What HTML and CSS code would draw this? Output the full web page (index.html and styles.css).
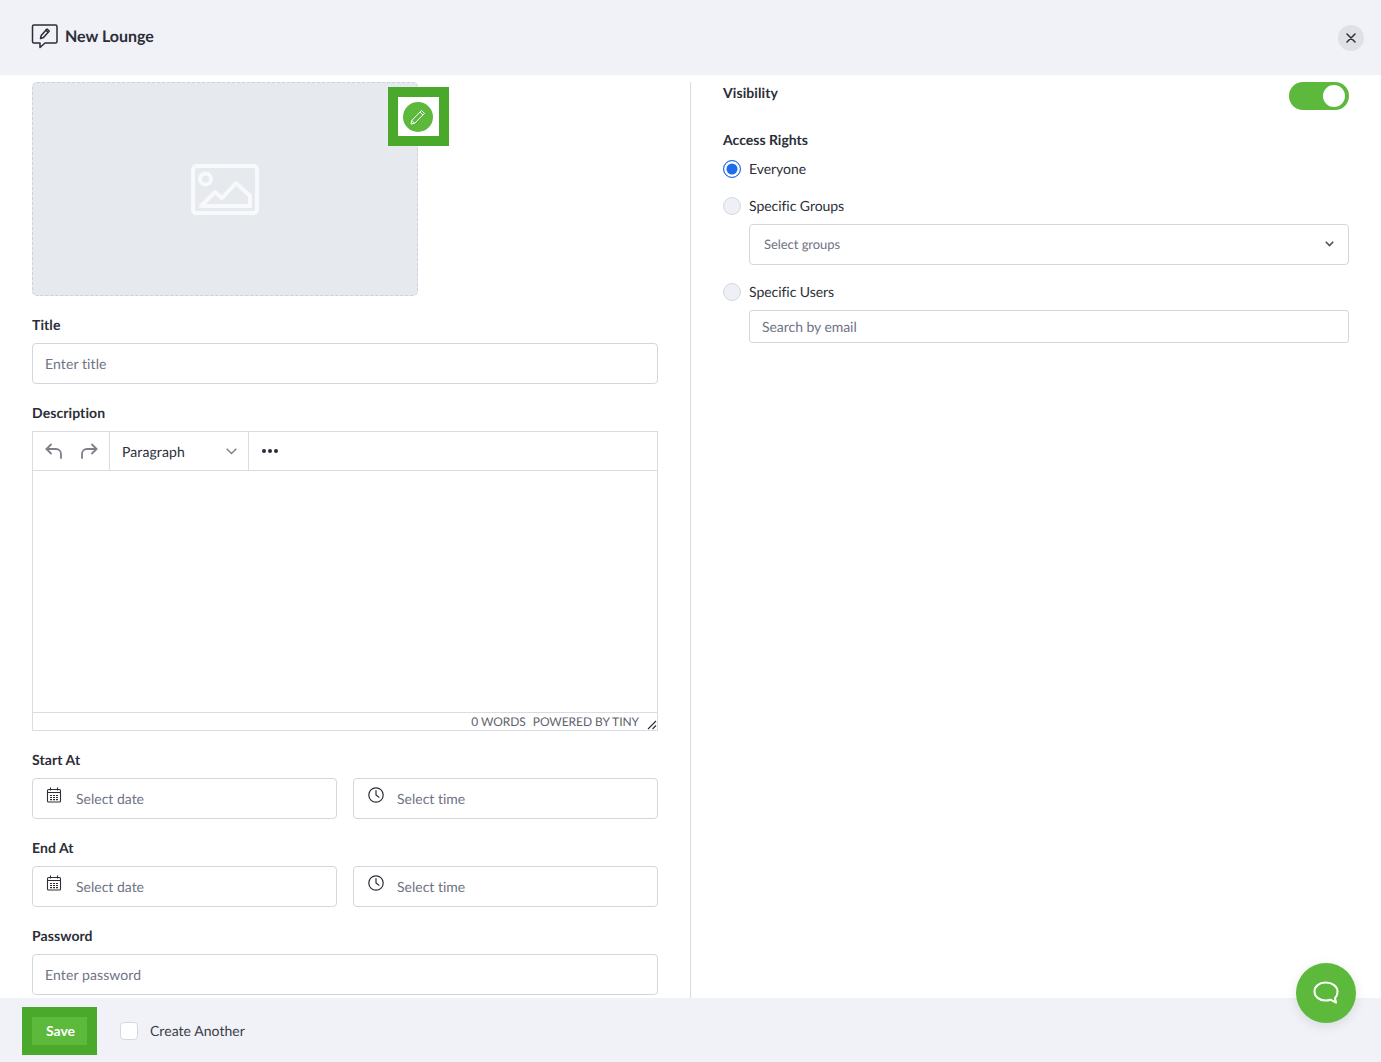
FILE: index.html
```html
<!DOCTYPE html>
<html lang="en">
<head>
<meta charset="utf-8">
<title>New Lounge</title>
<link rel="stylesheet" href="styles.css">
</head>
<body>
<div class="page">
  <header class="header">
    <div class="header-title">
      <svg class="lounge-icon" width="27" height="27" viewBox="0 0 27 27" fill="none" stroke="#2b2e38" stroke-width="1.5" stroke-linejoin="round" stroke-linecap="round">
        <path d="M3 2h21.5a1.5 1.5 0 0 1 1.5 1.5v15a1.5 1.5 0 0 1-1.5 1.5H14l-5 4.500V20H3a1.500 1.500 0 0 1-1.500-1.500v-15A1.500 1.500 0 0 1 3 2z"/>
        <path d="M9.500 15.500l.7-3 5.800-6.500 2.300 2-5.800 6.500z"/>
        <path d="M14.800 7.300l2.300 2"/>
      </svg>
      <h1 class="title">New Lounge</h1>
    </div>
    <button class="close-btn" aria-label="Close">
      <svg width="10" height="10" viewBox="0 0 10 10" stroke="#2b2e38" stroke-width="1.500" stroke-linecap="round"><path d="M1 1l8 8M9 1l-8 8"/></svg>
    </button>
  </header>

  <main class="main">
    <section class="col-left">
      <div class="cover">
        <svg class="cover-icon" width="68" height="51" viewBox="0 0 68 51" fill="none" stroke="#f8f9fb" stroke-width="4" stroke-linejoin="round">
          <rect x="2" y="2" width="64" height="47" rx="3.500"/>
          <circle cx="14.500" cy="15" r="5.500"/>
          <path d="M10 42l14-14 7 6 14-15 14 13v10z"/>
        </svg>
        <button class="edit-btn" aria-label="Edit image">
          <span class="edit-circle">
            <svg width="16" height="16" viewBox="0 0 16 16" fill="none" stroke="#fff" stroke-width="1" stroke-linejoin="round"><path d="M1 15l.8-3.500L11.500 1.500l3 2.800-9.800 10z"/><path d="M10 3.200l3 2.800M1.800 11.500l2.900 2.800"/></svg>
          </span>
        </button>
      </div>

      <div class="field">
        <label class="label">Title</label>
        <div class="input input-tall"><span class="ph ph-wide">Enter title</span></div>
      </div>

      <div class="field">
        <label class="label">Description</label>
        <div class="editor">
          <div class="toolbar">
            <div class="tb-group tb-history">
              <svg width="18" height="18" viewBox="0 0 18 18" fill="none" stroke="#7d808a" stroke-width="1.800" stroke-linecap="round" stroke-linejoin="round"><path d="M6 2.500L1.500 7 6 11.500"/><path d="M1.500 7h9.500a5 5 0 0 1 5 5v4"/></svg>
              <svg width="18" height="18" viewBox="0 0 18 18" fill="none" stroke="#7d808a" stroke-width="1.800" stroke-linecap="round" stroke-linejoin="round"><path d="M12 2.500L16.500 7 12 11.500"/><path d="M16.500 7H7a5 5 0 0 0-5 5v4"/></svg>
            </div>
            <div class="tb-group tb-format">
              <span class="tb-text">Paragraph</span>
              <svg width="11" height="7" viewBox="0 0 11 7" fill="none" stroke="#7d808a" stroke-width="1.400"><path d="M.7.8l4.800 4.800L10.300.8"/></svg>
            </div>
            <div class="tb-group tb-more">
              <span class="dot"></span><span class="dot"></span><span class="dot"></span>
            </div>
          </div>
          <div class="editor-body"></div>
          <div class="statusbar">
            <span>0 WORDS</span><span>POWERED BY TINY</span>
            <svg class="resize" width="10" height="10" viewBox="0 0 10 10" stroke="#2b2e38" stroke-width="1.100" fill="none"><path d="M1 9l8-8M5.500 9L9 5.500"/></svg>
          </div>
        </div>
      </div>

      <div class="field">
        <label class="label">Start At</label>
        <div class="pair">
          <div class="input input-tall input-icon">
            <svg class="ic" width="16" height="16" viewBox="0 0 16 16" fill="none" stroke="#2b2e38" stroke-width="1.100"><rect x="1.500" y="2.500" width="13" height="12.500" rx="1"/><path d="M1.500 5.500h13M4.500 .5v3M11.500 .5v3"/><path d="M4 8.500h2M7 8.500h2M10 8.500h2M4 10.500h2M7 10.500h2M10 10.500h2M4 12.700h2M7 12.700h2M10 12.700h2" stroke-width="1.200"/></svg>
            <span class="ph">Select date</span>
          </div>
          <div class="input input-tall input-icon">
            <svg class="ic ic-time" width="16" height="16" viewBox="0 0 16 16" fill="none" stroke="#2b2e38" stroke-width="1.200" stroke-linecap="round"><circle cx="8" cy="8" r="7.200"/><path d="M8 3.500V8l3 2.200"/></svg>
            <span class="ph">Select time</span>
          </div>
        </div>
      </div>

      <div class="field">
        <label class="label">End At</label>
        <div class="pair">
          <div class="input input-tall input-icon">
            <svg class="ic" width="16" height="16" viewBox="0 0 16 16" fill="none" stroke="#2b2e38" stroke-width="1.100"><rect x="1.500" y="2.500" width="13" height="12.500" rx="1"/><path d="M1.500 5.500h13M4.500 .5v3M11.500 .5v3"/><path d="M4 8.500h2M7 8.500h2M10 8.500h2M4 10.500h2M7 10.500h2M10 10.500h2M4 12.700h2M7 12.700h2M10 12.700h2" stroke-width="1.200"/></svg>
            <span class="ph">Select date</span>
          </div>
          <div class="input input-tall input-icon">
            <svg class="ic ic-time" width="16" height="16" viewBox="0 0 16 16" fill="none" stroke="#2b2e38" stroke-width="1.200" stroke-linecap="round"><circle cx="8" cy="8" r="7.200"/><path d="M8 3.500V8l3 2.200"/></svg>
            <span class="ph">Select time</span>
          </div>
        </div>
      </div>

      <div class="field">
        <label class="label">Password</label>
        <div class="input input-tall"><span class="ph ph-wide">Enter password</span></div>
      </div>
    </section>

    <section class="col-right">
      <div class="row-visibility">
        <span class="label-plain label-visibility">Visibility</span>
        <span class="toggle"><span class="knob"></span></span>
      </div>
      <div class="label-plain access-label">Access Rights</div>
      <div class="radio-row radio-first"><span class="radio radio-on"></span><span class="radio-text">Everyone</span></div>
      <div class="radio-row radio-groups"><span class="radio"></span><span class="radio-text">Specific Groups</span></div>
      <div class="select">
        <span class="ph ph-small">Select groups</span>
        <svg width="9" height="6" viewBox="0 0 9 6" fill="none" stroke="#4c5060" stroke-width="1.600"><path d="M.8.8l3.700 3.700L8.200.8"/></svg>
      </div>
      <div class="radio-row radio-users"><span class="radio"></span><span class="radio-text">Specific Users</span></div>
      <div class="search"><span class="ph ph-tight">Search by email</span></div>
    </section>
  </main>

  <footer class="footer">
    <button class="save-btn">Save</button>
    <span class="checkbox"></span>
    <span class="checkbox-text">Create Another</span>
  </footer>

  <button class="chat-btn" aria-label="Chat">
    <svg width="26" height="24" viewBox="0 0 26 24" fill="none" stroke="#fff" stroke-width="2" stroke-linejoin="round"><path d="M12.500 1.500C6 1.500 1.500 5.500 1.500 10.500s4.500 9 11 9c2 0 3.500-.3 4.800-.8l5.700 2.800-1-4.500c1.800-1.700 2.500-4 2.500-6.500 0-5-5-9-12-9z"/></svg>
  </button>
</div>
</body>
</html>
```
FILE: styles.css
```css
* { box-sizing: border-box; }
html, body { margin: 0; height: 100%; }
body {
  font-family: "Lato", "Liberation Sans", sans-serif;
  color: #2b2e38;
  background: #fff;
  overflow: hidden;
  font-variant-ligatures: none;
  text-rendering: geometricPrecision;
}
.page {
  position: relative;
  display: flex;
  flex-direction: column;
  height: 1062px;
}
.header {
  height: 75px;
  flex: none;
  background: #f0f2f7;
  display: flex;
  align-items: center;
  justify-content: space-between;
  padding: 0 17px 3px 31px;
}
.header-title { display: flex; align-items: center; gap: 7px; }
.title { margin: 0; padding-top: 2px; font-size: 16px; font-weight: 700; line-height: 22px; color: #2b2e38; }
.close-btn {
  width: 26px; height: 26px;
  border: 0; border-radius: 50%;
  background: #e0e1e4;
  display: flex; align-items: center; justify-content: center;
  padding: 0;
  margin-top: 3px;
}
.main {
  flex: 1;
  min-height: 0;
  overflow: hidden;
  display: grid;
  grid-template-columns: 626px 1fr;
  padding: 7px 32px 0;
}
.col-left { display: flex; flex-direction: column; }
.col-right {
  margin-left: 32px;
  border-left: 1px solid #d9dce3;
  padding-left: 32px;
  display: flex;
  flex-direction: column;
}
.cover {
  position: relative;
  width: 386px;
  height: 214px;
  flex: none;
  background: #e6e9ee;
  border: 1px dashed #cdd1d9;
  border-radius: 5px;
  display: flex;
  align-items: center;
  justify-content: center;
}
.edit-btn {
  position: absolute;
  left: 355px;
  top: 4px;
  width: 61px;
  height: 59px;
  border: 10px solid #4aa92a;
  background: #fff;
  padding: 0 1px 0 0;
  display: flex;
  align-items: center;
  justify-content: center;
}
.edit-circle {
  width: 30px; height: 30px;
  border-radius: 50%;
  background: #5cb93c;
  display: flex; align-items: center; justify-content: center;
}
.field { margin-top: 19px; flex: none; }
.label {
  display: block;
  font-size: 14px;
  font-weight: 700;
  line-height: 20px;
  margin-bottom: 8px;
  color: #2b2e38;
  letter-spacing: .08px;
}
.label-plain {
  font-size: 14px;
  font-weight: 700;
  line-height: 20px;
  color: #2b2e38;
}
.label-visibility { margin-top: 1px; letter-spacing: .08px; }
.input {
  display: flex;
  align-items: center;
  background: #fff;
  border: 1px solid #d3d6dd;
  border-radius: 4px;
  padding: 0 12px;
}
.input-tall { height: 41px; }
.input-icon { position: relative; padding-left: 43px; }
.ic { position: absolute; left: 13px; top: 8px; }
.ic-time { left: 14px; }
.ph { font-size: 14px; color: #6f7384; line-height: 20px; }
.ph-wide { letter-spacing: .1px; }
.ph-tight { letter-spacing: -.05px; }
.ph-small { font-size: 13px; letter-spacing: -.05px; }
.pair { display: grid; grid-template-columns: 1fr 1fr; gap: 16px; }
.editor {
  height: 300px;
  border: 1px solid #d9dce3;
  display: flex;
  flex-direction: column;
}
.toolbar {
  height: 39px;
  flex: none;
  display: flex;
  border-bottom: 1px solid #d9dce3;
}
.tb-group { display: flex; align-items: center; }
.tb-history { width: 77px; padding-left: 12px; gap: 17px; border-right: 1px solid #d9dce3; }
.tb-format {
  width: 139px;
  padding: 0 11px 0 12px;
  justify-content: space-between;
  border-right: 1px solid #d9dce3;
}
.tb-text { font-size: 14px; color: #2b2e38; letter-spacing: .1px; }
.tb-more { padding-left: 13px; gap: 2px; }
.dot { width: 4px; height: 4px; border-radius: 50%; background: #2b2e38; }
.editor-body { flex: 1; }
.statusbar {
  height: 18px;
  flex: none;
  border-top: 1px solid #d9dce3;
  display: flex;
  align-items: center;
  justify-content: flex-end;
  gap: 7px;
  padding-right: 18px;
  font-size: 12px;
  color: #5f626c;
  position: relative;
  letter-spacing: -.05px;
}
.resize { position: absolute; right: 0; bottom: 0; }
.row-visibility { display: flex; justify-content: space-between; align-items: flex-start; height: 28px; flex: none; }
.toggle {
  width: 60px; height: 28px;
  border-radius: 14px;
  background: #5cb93c;
  display: flex; align-items: center; justify-content: flex-end;
  padding-right: 4px;
}
.knob { width: 22px; height: 22px; border-radius: 50%; background: #fff; }
.access-label { margin-top: 20px; flex: none; }
.radio-row { display: flex; align-items: center; gap: 8px; height: 20px; flex: none; }
.radio-first { margin-top: 9px; }
.radio-groups { margin-top: 17px; }
.radio-users { margin-top: 17px; }
.radio {
  width: 18px; height: 18px;
  border-radius: 50%;
  background: #eef0f5;
  border: 1px solid #d5d8e0;
  flex: none;
}
.radio-on {
  background: #1f6bec;
  border: 1px solid #1f6bec;
  box-shadow: inset 0 0 0 2.5px #fff;
}
.radio-text { font-size: 14px; color: #2b2e38; line-height: 20px; letter-spacing: -.05px; }
.select {
  margin: 8px 0 0 26px;
  height: 41px;
  flex: none;
  border: 1px solid #d3d6dd;
  border-radius: 4px;
  display: flex;
  align-items: center;
  justify-content: space-between;
  padding: 0 14px 2px;
}
.search {
  margin: 8px 0 0 26px;
  height: 33px;
  flex: none;
  border: 1px solid #d3d6dd;
  border-radius: 3px;
  display: flex;
  align-items: center;
  padding: 0 12px;
}
.footer {
  height: 64px;
  flex: none;
  background: #f0f2f7;
  display: flex;
  align-items: center;
  padding-left: 22px;
}
.save-btn {
  width: 75px; height: 48px;
  border: 10px solid #4aa92a;
  background: #5cb93c;
  color: #fff;
  font: 700 14px "Lato", "Liberation Sans", sans-serif;
  padding: 0 0 2px 2px;
  margin-top: 2px;
}
.checkbox {
  width: 18px; height: 18px;
  margin-left: 23px;
  margin-top: 2px;
  background: #fff;
  border: 1px solid #d5d8e0;
  border-radius: 4px;
}
.checkbox-text { margin-left: 12px; font-size: 14px; color: #3a3d47; letter-spacing: .05px; }
.chat-btn {
  position: absolute;
  left: 1296px;
  top: 963px;
  width: 60px; height: 60px;
  border: 0; border-radius: 50%;
  background: #5cb93c;
  box-shadow: 0 3px 12px rgba(0,0,0,.1);
  display: flex; align-items: center; justify-content: center;
  padding: 0;
}
```
